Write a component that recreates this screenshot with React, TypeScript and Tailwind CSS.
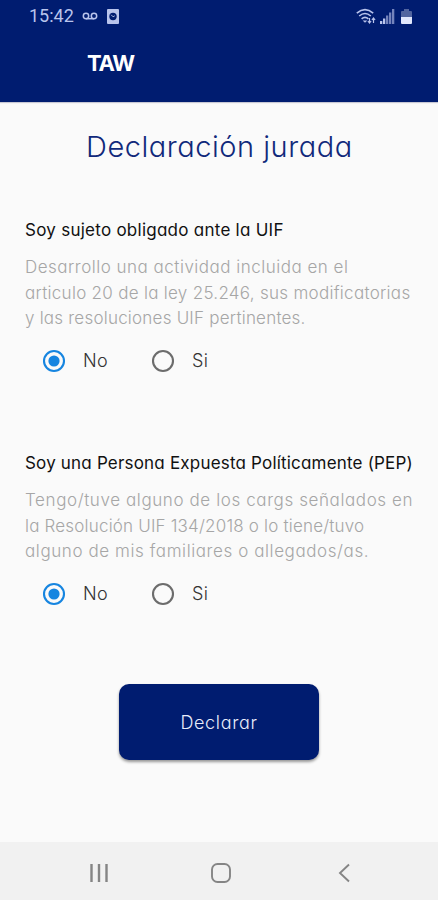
import { useState } from "react";

type Line = { text: string; tracking: string };

type QuestionProps = {
  title: Line;
  lines: Line[];
};

function Radio({ label, checked, onSelect }: { label: string; checked: boolean; onSelect: () => void }) {
  return (
    <button type="button" role="radio" aria-checked={checked} onClick={onSelect} className="flex h-6 items-center">
      <svg viewBox="0 0 24 24" className="size-6 shrink-0" fill="none">
        <circle cx="12" cy="12" r="10" strokeWidth="2.1" className={checked ? "stroke-[#1685e0]" : "stroke-[#6c6c6c]"} />
        {checked && <circle cx="12" cy="12" r="5.6" className="fill-[#1685e0]" />}
      </svg>
      <span className="ml-[17px] text-[18px] leading-6 font-light tracking-[0.4px] text-[#333]">{label}</span>
    </button>
  );
}

function Question({ title, lines }: QuestionProps) {
  const [answer, setAnswer] = useState("No");
  return (
    <section className="h-[233px] shrink-0 pl-[25px] whitespace-nowrap">
      <h2 className={`text-[17px] leading-[26px] font-normal text-[#111] ${title.tracking}`}>{title.text}</h2>
      <p className="mt-3 text-[17px] leading-[25.5px] font-light text-[#a6a6a6]">
        {lines.map((line) => (
          <span key={line.text} className="block">
            <span className={line.tracking}>{line.text}</span>
          </span>
        ))}
      </p>
      <div role="radiogroup" className="mt-[17px] flex pl-[17px]">
        <div className="w-[109px]">
          <Radio label="No" checked={answer === "No"} onSelect={() => setAnswer("No")} />
        </div>
        <Radio label="Si" checked={answer === "Si"} onSelect={() => setAnswer("Si")} />
      </div>
    </section>
  );
}

function StatusBar() {
  return (
    <div className="flex h-8 items-center pl-[29px] pr-[26px] text-[#b9c4ec]">
      <span className="w-[45px] font-[Roboto] text-[18px] leading-8">15:42</span>
      <svg viewBox="0 0 16 8" className="ml-2 h-2 w-4" fill="none" stroke="currentColor" strokeWidth="1.5">
        <circle cx="4" cy="4" r="2.7" />
        <circle cx="12" cy="4" r="2.7" />
        <path d="M4 6.7h8" />
      </svg>
      <svg viewBox="0 0 12 15" className="ml-[9px] h-[15px] w-3">
        <rect width="12" height="15" rx="1" fill="currentColor" />
        <circle cx="6" cy="7.5" r="3.7" fill="#001c70" />
        <path d="M4.200 5.800 6 7.800l1.800-1" stroke="currentColor" strokeWidth=".9" fill="none" />
      </svg>
      <svg viewBox="0 0 20 17" className="ml-auto h-[17px] w-5" fill="none" stroke="currentColor" strokeWidth="1.6">
        <path d="M.8 5.2q8.2-7 16.4 0M3.2 8q5.8-5 11.6 0M5.6 10.8q3.4-3 6.8 0" />
        <path d="m6.7 12.4 2.3 2.4 2.3-2.4z" fill="currentColor" stroke="none" />
        <path d="M13.5 10v5m-1.6-2 1.6 2 1.6-2M17.5 15v-5m-1.6 2 1.6-2 1.6 2" strokeWidth="1.2" />
      </svg>
      <svg viewBox="0 0 15 15" className="ml-1 h-[15px] w-[15px]" fill="currentColor">
        <path d="M0 12h2.3v3H0zM3 9.500h2.300V15H3z" />
        <path d="M6 6.500h2.300V15H6zM9 3.500h2.300V15H9zM12 0h2.300v15H12z" opacity=".62" />
      </svg>
      <svg viewBox="0 0 11 15" className="ml-[6px] h-[15px] w-[11px]">
        <path d="M3 0h5v2h2q1 0 1 1v5H0V3q0-1 1-1h2z" fill="#52659f" />
        <path d="M0 8h11v6q0 1-1 1H1q-1 0-1-1z" fill="#e1e7fc" />
      </svg>
    </div>
  );
}

export default function App() {
  return (
    <div className="flex h-[900px] w-[438px] flex-col overflow-hidden bg-[#fafafa] font-[Inter,sans-serif] [font-feature-settings:'cv11']">
      <header className="h-[102px] shrink-0 bg-[#001c70] shadow-[0_1px_1px_rgba(0,0,60,0.2)]">
        <StatusBar />
        <div className="flex h-[62px] items-center pl-[87px] text-[22px] font-bold text-white">
          <span className="tracking-[-1.2px]">TAW</span>
        </div>
      </header>
      <main className="flex min-h-0 flex-1 flex-col">
        <h1 className="mt-[25px] h-10 shrink-0 pl-[86px] text-[29px] leading-10 font-light whitespace-nowrap text-[#10297b]">
          <span className="tracking-[0.53px]">Declaración jurada</span>
        </h1>
        <div className="mt-[50px] shrink-0">
          <Question
            title={{ text: "Soy sujeto obligado ante la UIF", tracking: "tracking-[0.26px]" }}
            lines={[
              { text: "Desarrollo una actividad incluida en el", tracking: "tracking-[0.5px]" },
              { text: "articulo 20 de la ley 25.246, sus modificatorias", tracking: "tracking-[0.29px]" },
              { text: "y las resoluciones UIF pertinentes.", tracking: "tracking-[0.22px]" },
            ]}
          />
          <Question
            title={{ text: "Soy una Persona Expuesta Políticamente (PEP)", tracking: "tracking-[0.19px]" }}
            lines={[
              { text: "Tengo/tuve alguno de los cargs señalados en", tracking: "tracking-[0.6px]" },
              { text: "la Resolución UIF 134/2018 o lo tiene/tuvo", tracking: "tracking-[0.19px]" },
              { text: "alguno de mis familiares o allegados/as.", tracking: "tracking-[0.59px]" },
            ]}
          />
        </div>
        <button
          type="button"
          className="mt-px h-[76px] w-[200px] shrink-0 self-center rounded-[10px] bg-[#001c70] text-[18px] font-light tracking-[0.65px] text-[#e8ecfa] shadow-[0_2px_3px_rgba(0,0,0,0.4)]"
        >
          Declarar
        </button>
      </main>
      <nav className="flex h-[58px] shrink-0 items-center bg-[#f1f1f1] pt-[3px] text-[#858585]">
        <svg viewBox="0 0 20 20" className="ml-[89px] size-5" stroke="currentColor" strokeWidth="2.4">
          <path d="M2.500 1v18M10 1v18M17.500 1v18" />
        </svg>
        <svg viewBox="0 0 22 22" className="ml-[101px] size-[22px]" fill="none" stroke="currentColor" strokeWidth="1.900">
          <rect x="2" y="2" width="18" height="18" rx="5.500" />
        </svg>
        <svg viewBox="0 0 12 20" className="ml-[106px] h-5 w-3" fill="none" stroke="currentColor" strokeWidth="1.900">
          <path d="M11 1.500 2 10l9 8.500" />
        </svg>
      </nav>
    </div>
  );
}
